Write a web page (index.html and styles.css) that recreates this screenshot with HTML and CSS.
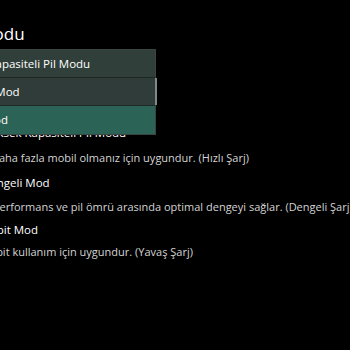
FILE: index.html
```html
<!DOCTYPE html>
<html lang="tr">
<head>
<meta charset="utf-8">
<link rel="stylesheet" href="styles.css">
</head>
<body>
<div class="page">
  <h1 class="heading">Pil Modu</h1>
  <div class="combo-space"></div>
  <div class="options">
    <div class="opt-title t1">Yüksek Kapasiteli Pil Modu</div>
    <div class="opt-desc d1">Daha fazla mobil olmanız için uygundur. (Hızlı Şarj)</div>
    <div class="opt-title t2">Dengeli Mod</div>
    <div class="opt-desc d2">Performans ve pil ömrü arasında optimal dengeyi sağlar. (Dengeli Şarj)</div>
    <div class="opt-title t3">Sabit Mod</div>
    <div class="opt-desc d3">Sabit kullanım için uygundur. (Yavaş Şarj)</div>
  </div>
  <div class="menu">
    <div class="item i1">Yüksek Kapasiteli Pil Modu</div>
    <div class="item i2">Dengeli Mod</div>
    <div class="item i3">Sabit Mod</div>
    <div class="thumb"></div>
  </div>
</div>
</body>
</html>
```
FILE: styles.css
```css
html, body {
  margin: 0;
  padding: 0;
  background: #000;
  width: 350px;
  height: 350px;
  overflow: hidden;
}
body {
  font-family: "Open Sans", "Noto Sans", sans-serif;
  color: #fff;
}
.page {
  position: relative;
  margin-left: -60px;
  width: 450px;
}
.heading {
  margin: 0 0 0 15px;
  padding-top: 22px;
  font-size: 17px;
  font-weight: 400;
  line-height: 24px;
}
.combo-space {
  height: 75px;
}
.options {
  display: flex;
  flex-direction: column;
}
.opt-title {
  font-size: 11.5px;
  color: #fff;
  white-space: nowrap;
}
.opt-desc {
  font-size: 11px;
  color: #d4d4d4;
  white-space: nowrap;
}
.t1 { margin-left: 44px; line-height: 24px; }
.d1 { margin-left: 51px; line-height: 26px; }
.t2 { margin-left: 42px; line-height: 24px; }
.d2 { margin-left: 53px; line-height: 24px; }
.t3 { margin-left: 44px; line-height: 22px; }
.d3 { margin-left: 44px; line-height: 22px; }
.menu {
  position: absolute;
  left: 0;
  top: 49px;
  width: 216px;
  box-sizing: border-box;
  display: flex;
  flex-direction: column;
  background: #2d3a37;
  border: 1px solid #3a4542;
}
.item {
  height: 28px;
  line-height: 27px;
  font-size: 11.5px;
  color: #fff;
  white-space: nowrap;
  box-sizing: border-box;
}
.i1 { background: #313f3b; padding-left: 7px; border-bottom: 1px solid #1f2725; }
.i2 { background: #2f3c39; padding-left: 11px; border-bottom: 1px solid #1f2725; }
.i3 { background: #2b6456; padding-left: 13px; }
.thumb {
  position: absolute;
  right: -2px;
  top: 28px;
  width: 2px;
  height: 27px;
  background: #7f8a86;
}
```
